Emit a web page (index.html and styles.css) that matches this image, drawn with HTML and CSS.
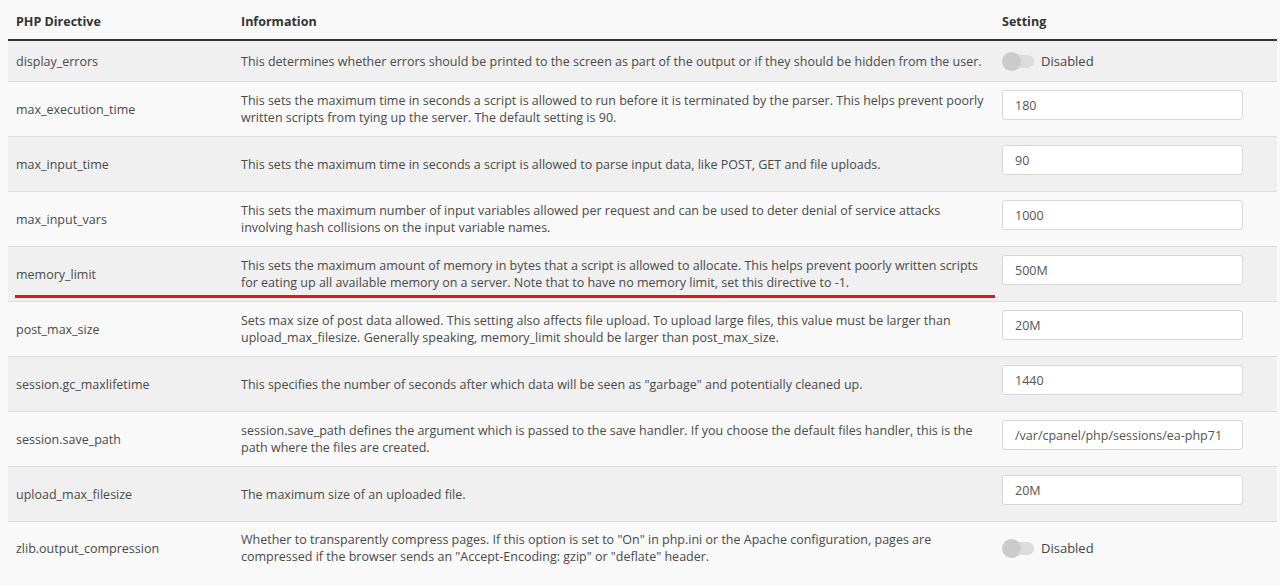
FILE: index.html
```html
<!DOCTYPE html>
<html lang="en">
<head>
  <meta charset="UTF-8" />
  <title>MultiPHP INI Editor</title>
  <link rel="stylesheet" href="styles.css">
</head>
<body>
  <div class="editor">
    <table class="ini-table">
      <colgroup>
        <col class="col-name">
        <col class="col-info">
        <col class="col-setting">
      </colgroup>
      <thead>
        <tr>
          <th>PHP Directive</th>
          <th>Information</th>
          <th>Setting</th>
        </tr>
      </thead>
      <tbody>
        <tr>
          <td>display_errors</td>
          <td>This determines whether errors should be printed to the screen as part of the output or if they should be hidden from the user.</td>
          <td><label class="toggle"><span class="track"><span class="knob"></span></span> Disabled</label></td>
        </tr>
        <tr>
          <td>max_execution_time</td>
          <td>This sets the maximum time in seconds a script is allowed to run before it is terminated by the parser. This helps prevent poorly written scripts from tying up the server. The default setting is 90.</td>
          <td><input class="field" type="text" value="180"></td>
        </tr>
        <tr>
          <td>max_input_time</td>
          <td>This sets the maximum time in seconds a script is allowed to parse input data, like POST, GET and file uploads.</td>
          <td><input class="field" type="text" value="90"></td>
        </tr>
        <tr>
          <td>max_input_vars</td>
          <td>This sets the maximum number of input variables allowed per request and can be used to deter denial of service attacks involving hash collisions on the input variable names.</td>
          <td><input class="field" type="text" value="1000"></td>
        </tr>
        <tr>
          <td>memory_limit</td>
          <td>This sets the maximum amount of memory in bytes that a script is allowed to allocate. This helps prevent poorly written scripts for eating up all available memory on a server. Note that to have no memory limit, set this directive to -1.</td>
          <td><input class="field" type="text" value="500M"></td>
        </tr>
        <tr>
          <td>post_max_size</td>
          <td>Sets max size of post data allowed. This setting also affects file upload. To upload large files, this value must be larger than upload_max_filesize. Generally speaking, memory_limit should be larger than post_max_size.</td>
          <td><input class="field" type="text" value="20M"></td>
        </tr>
        <tr>
          <td>session.gc_maxlifetime</td>
          <td>This specifies the number of seconds after which data will be seen as "garbage" and potentially cleaned up.</td>
          <td><input class="field" type="text" value="1440"></td>
        </tr>
        <tr>
          <td>session.save_path</td>
          <td>session.save_path defines the argument which is passed to the save handler. If you choose the default files handler, this is the path where the files are created.</td>
          <td><input class="field" type="text" value="/var/cpanel/php/sessions/ea-php71"></td>
        </tr>
        <tr>
          <td>upload_max_filesize</td>
          <td>The maximum size of an uploaded file.</td>
          <td><input class="field" type="text" value="20M"></td>
        </tr>
        <tr>
          <td>zlib.output_compression</td>
          <td>Whether to transparently compress pages. If this option is set to "On" in php.ini or the Apache configuration, pages are compressed if the browser sends an "Accept-Encoding: gzip" or "deflate" header.</td>
          <td><label class="toggle"><span class="track"><span class="knob"></span></span> Disabled</label></td>
        </tr>
      </tbody>
    </table>
    <div class="underline"></div>
  </div>
</body>
</html>
```

FILE: styles.css
```css
body {
  font-family: "Open Sans", Arial, sans-serif;
  font-size: 12.5px;
  background: #f9f9f9;
  color: #4a4a4a;
  margin: 0;
  padding: 0 3px 0 8px;
}

.editor {
  position: relative;
}

.ini-table {
  width: 100%;
  border-collapse: collapse;
  table-layout: fixed;
}

.col-name { width: 225px; }
.col-info { width: 761px; }

.ini-table th {
  text-align: left;
  font-weight: bold;
  color: #333;
  padding: 13px 8px 8px;
  line-height: 18px;
  border-bottom: 2px solid #333;
}

.ini-table td {
  padding: 8px;
  line-height: 17px;
  vertical-align: middle;
  border-bottom: 1px solid #ddd;
}

.ini-table tbody tr:nth-child(odd) {
  background: #f0f0f0;
}

.ini-table tbody tr:last-child td {
  border-bottom: none;
  padding-top: 9px;
}

.field {
  display: block;
  box-sizing: border-box;
  width: 241px;
  height: 30px;
  margin: 0 0 8px;
  padding: 0 12px;
  border: 1px solid #d8d8d8;
  border-radius: 3px;
  background: #fff;
  font-family: inherit;
  font-size: 12.5px;
  color: #555;
}

.toggle {
  display: flex;
  align-items: center;
  gap: 7px;
  height: 24px;
  font-size: 13px;
  color: #444;
}

.track {
  position: relative;
  display: inline-block;
  width: 32px;
  height: 13px;
  border-radius: 7px;
  background: #dcdcdc;
}

.knob {
  position: absolute;
  left: 0;
  top: -3px;
  width: 19px;
  height: 19px;
  border-radius: 50%;
  background: #cbcbcb;
}

.underline {
  position: absolute;
  left: 7px;
  top: 295px;
  width: 980px;
  height: 3px;
  background: #e8141a;
}
```
